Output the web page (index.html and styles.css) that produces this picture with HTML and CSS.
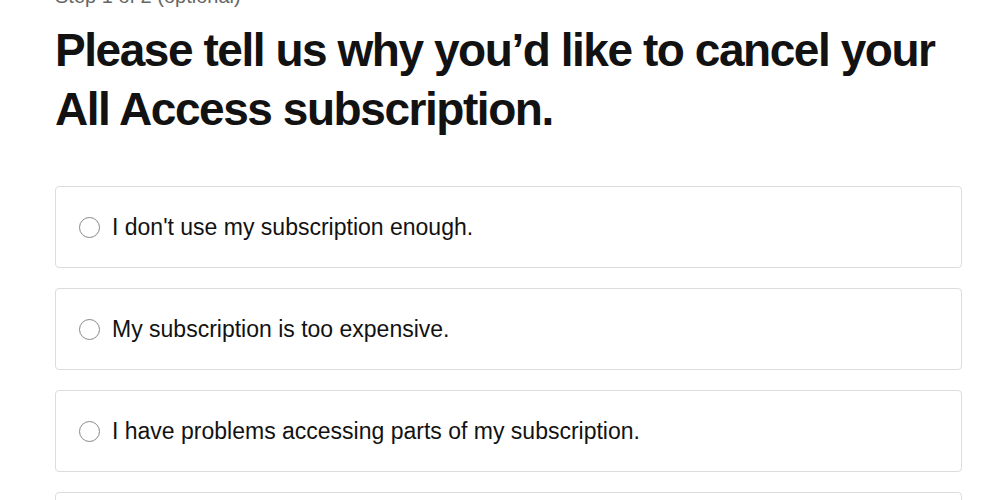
FILE: index.html
```html
<!DOCTYPE html>
<html lang="en">
<head>
    <meta charset="UTF-8">
    <meta name="viewport" content="width=device-width, initial-scale=1.0">
    <title>Cancel your subscription</title>
    <link rel="stylesheet" href="styles.css">
</head>
<body>
    <div class="cancel-page">
        <p class="step">Step 1 of 2 (optional)</p>
        <h1>Please tell us why you’d like to cancel your All Access subscription.</h1>
        <form class="reasons">
            <label class="reason">
                <input type="radio" name="reason">
                <span>I don't use my subscription enough.</span>
            </label>
            <label class="reason">
                <input type="radio" name="reason">
                <span>My subscription is too expensive.</span>
            </label>
            <label class="reason">
                <input type="radio" name="reason">
                <span>I have problems accessing parts of my subscription.</span>
            </label>
            <label class="reason">
                <input type="radio" name="reason">
                <span>I'm not satisfied with the content.</span>
            </label>
        </form>
    </div>
</body>
</html>
```

FILE: styles.css
```css
body {
    margin: 0;
    background: #fff;
    color: #121212;
    font-family: "Liberation Sans", Arial, sans-serif;
    overflow: hidden;
}

.cancel-page {
    width: 907px;
    margin-left: 55px;
    margin-top: -15px;
}

.step {
    margin: 0;
    font-size: 20px;
    line-height: 22px;
    color: #666;
}

h1 {
    margin: 14px 0 0 0;
    font-size: 46px;
    line-height: 59px;
    font-weight: 700;
    letter-spacing: -1.45px;
    color: #121212;
}

.reasons {
    display: flex;
    flex-direction: column;
    gap: 20px;
    margin-top: 47px;
}

.reason {
    display: flex;
    align-items: center;
    gap: 12px;
    height: 80px;
    padding: 0 23px;
    border: 1px solid #dcdcdc;
    border-radius: 4px;
    font-size: 23px;
    cursor: pointer;
}

.reason input {
    appearance: none;
    width: 21px;
    height: 21px;
    margin: 0;
    border: 1.5px solid #888;
    border-radius: 50%;
    flex-shrink: 0;
}
```
